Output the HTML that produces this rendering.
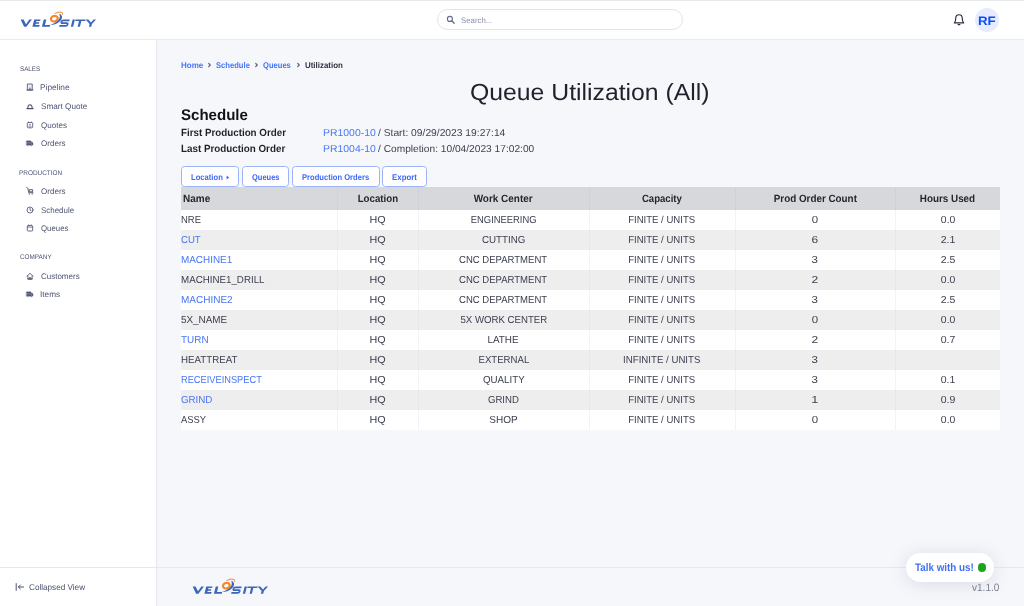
<!DOCTYPE html>
<html lang="en">
<head>
<meta charset="utf-8">
<title>Queue Utilization (All)</title>
<style>
*{box-sizing:border-box;margin:0;padding:0}
html,body{width:1024px;height:606px;overflow:hidden}
body{font-family:"Liberation Sans",sans-serif;background:#f6f7fb;color:#3c3f4f;position:relative;text-rendering:geometricPrecision}
a{text-decoration:none;color:#4876f6}
.topline{position:absolute;left:0;top:0;width:1024px;height:1px;background:#e8eae9;z-index:10}
.header{position:absolute;left:0;top:0;width:1024px;height:40px;background:#fff;border-bottom:1px solid #e9ebf4}
.sidebar{position:absolute;left:0;top:40px;width:157px;height:566px;background:#fff;border-right:1px solid #e4e6f0}
.sb-foot{position:absolute;left:0;top:567px;width:156px;height:39px;border-top:1px solid #e6e8f1;background:#fff}
.footer{position:absolute;left:157px;top:567px;width:867px;height:39px;border-top:1px solid #e6e8f1}
.t{position:absolute;white-space:nowrap;transform-origin:left center;display:block}
.s{display:inline-block;white-space:nowrap}
.abs{position:absolute}
#app{position:absolute;left:0;top:0;width:1024px;height:606px;will-change:transform}
.search{position:absolute;left:436.5px;top:9px;width:246.5px;height:21px;border:1px solid #e1e4ee;border-radius:10.5px;background:#fff}
.avatar{position:absolute;left:975px;top:8px;width:24.4px;height:24.4px;border-radius:50%;background:#e6ecfd}
.btn{position:absolute;top:166px;height:21px;border:1px solid #9cb3fa;border-radius:3.5px;background:#fff}
table{position:absolute;left:181px;top:187px;width:819px;border-collapse:collapse;table-layout:fixed;font-size:10.2px;color:#3c3f4f}
th{height:23px;background:#d7d8db;font-weight:bold;color:#23252f;text-align:center;font-size:10.5px;padding:1px 0 0 0;vertical-align:top;border-right:1px solid #d0d2db;line-height:22px}
th:first-child{text-align:left;padding-left:1.9px}
th:last-child,td:last-child{border-right:none}
td{height:20px;text-align:center;padding:1px 0 0 0;border-right:1px solid #ececef;line-height:19px;vertical-align:top}
td:first-child{text-align:left;padding-left:0.3px}
tr.o td{background:#fff;border-right-color:#f2f3f8}
tr.e td{background:#eeeeef;border-right-color:#e7e8ee}
.chat{position:absolute;left:906px;top:553px;width:88.2px;height:29.2px;border-radius:14.6px;background:#fff;box-shadow:0 2px 18px rgba(70,80,120,0.16)}
.dot{position:absolute;left:977.5px;top:563.2px;width:8.4px;height:8.4px;border-radius:50%;background:#1fa51a}
</style>
</head>
<body>
<div id="app">
<div class="header"></div>
<div class="topline"></div>
<div class="sidebar"></div>
<div class="sb-foot"></div>
<div class="footer"></div>

<svg class="abs" style="left:16px;top:9px" width="84.0" height="22.0" viewBox="16 9 84 22">
<g transform="translate(0,26.8) skewX(-14)" fill="#3c66bb" stroke="none">
<path d="M18.8 -7.4H21.7L25.4 -2.5L27.5 -7.4H30.1L26.4 0H24.1Z"/>
<path d="M32.4 -7.4H38.7V-5.7H35V-4.45H38.2V-2.95H35V-1.7H39.2V0H32.4Z"/>
<path d="M41.9 -7.4H44.5V-1.7H49.7V0H41.9Z"/>
<path d="M67.9 -6.5H61.6Q60.2 -6.5 60.2 -5.1Q60.2 -3.7 61.6 -3.7H65.6Q67 -3.7 67 -2.3Q67 -0.9 65.6 -0.9H59.1" fill="none" stroke="#3c66bb" stroke-width="1.8"/>
<path d="M70.8 -7.4H73.1V0H70.8Z"/>
<path d="M73.7 -7.4H83.8V-5.7H79.9V0H77.6V-5.7H73.7Z"/>
<path d="M83.8 -7.4H86.5L89.9 -4.3L91.8 -7.4H94.2L91.2 -2.9V0H88.9V-2.9Z"/>
</g>
<ellipse cx="54.4" cy="18.7" rx="3.4" ry="2.75" fill="none" stroke="#f6862c" stroke-width="2.2" transform="rotate(-12 54.4 18.7)"/>
<path d="M55 13.5C57.4 12.2 60.8 11.9 62.3 12.8C62.7 13.2 62.7 13.9 62.5 14.4" fill="none" stroke="#f6862c" stroke-width="1.1" stroke-linecap="round" opacity="0.8"/>
<path d="M59.9 13.7C61.5 14.8 62.4 16.4 62 17.9C61.3 20.6 58.1 23.1 55.1 24.2C53.5 24.8 51.5 25 50 24.9C52 24.4 53.4 23.7 54.5 23C56.4 21.9 57.8 20.7 58.8 19.4C59.9 17.9 60.3 16.2 59.3 14.8Z" fill="#3c66bb"/>
</svg>
<div class="search"></div>
<svg class="abs" style="left:445.8px;top:15.2px" width="10" height="10" viewBox="0 0 10 10"><circle cx="3.9" cy="3.9" r="2.5" fill="none" stroke="#646c8d" stroke-width="1.15"/><path d="M5.8 5.8L8.2 8.2" stroke="#646c8d" stroke-width="1.3" stroke-linecap="round"/></svg>
<span class="t" style="left:461.2px;top:14px;font-size:8px;line-height:13px;transform:scaleX(0.976);color:#8a90a8;">Search...</span>
<svg class="abs" style="left:952px;top:13px" width="14" height="14" viewBox="0 0 14 14"><path d="M2.3 9.9 C3.5 8.9 3.7 7.8 3.7 5.5 C3.7 3.2 5 1.7 7 1.7 C9 1.7 10.3 3.2 10.3 5.5 C10.3 7.8 10.5 8.9 11.7 9.9 Z" fill="none" stroke="#2a2d3c" stroke-width="1.15" stroke-linejoin="round"/><path d="M6.1 11.6 H7.9" fill="none" stroke="#2a2d3c" stroke-width="1.2" stroke-linecap="round"/></svg>
<div class="avatar"></div>
<span class="t" style="left:978.0px;top:12px;font-size:12.2px;line-height:18px;transform:scaleX(1.092);font-weight:bold;color:#0d4ff0;">RF</span>
<span class="t" style="left:19.6px;top:64px;font-size:6.7px;line-height:11px;transform:scaleX(0.938);color:#4d5472;">SALES</span>
<svg class="abs" style="left:24.5px;top:82.3px" width="10" height="10" viewBox="0 0 10 10" fill="none" stroke="#4c5371" stroke-width="0.85" stroke-linejoin="round" stroke-linecap="round"><rect x="2.75" y="2" width="4.5" height="6" fill="#eceef3"/><path d="M1.9 8.1H8.1" stroke-width="0.9"/><rect x="4.45" y="5.7" width="1.1" height="2.2" fill="#4c5371" stroke="none"/></svg>
<span class="t" style="left:40.3px;top:81px;font-size:8.2px;line-height:13px;transform:scaleX(1.016);color:#4d5472;">Pipeline</span>
<svg class="abs" style="left:24.5px;top:101.3px" width="10" height="10" viewBox="0 0 10 10" fill="none" stroke="#4c5371" stroke-width="0.85" stroke-linejoin="round" stroke-linecap="round"><path d="M2.8 7.5C2.7 4.9 3.9 3.8 5 3.8C6.1 3.8 7.3 4.9 7.2 7.5" stroke-width="1.1"/><path d="M1.9 7.6H8.1" stroke-width="1.2"/></svg>
<span class="t" style="left:40.6px;top:100px;font-size:8.2px;line-height:13px;transform:scaleX(0.999);color:#4d5472;">Smart Quote</span>
<svg class="abs" style="left:24.5px;top:119.9px" width="10" height="10" viewBox="0 0 10 10" fill="none" stroke="#4c5371" stroke-width="0.85" stroke-linejoin="round" stroke-linecap="round"><rect x="2.3" y="2.5" width="5.4" height="5.3" rx="1"/><path d="M3.5 2.3V2M6.5 2.3V2" stroke-width="0.8"/><circle cx="5" cy="4.5" r="0.7" fill="#4c5371" stroke="none"/><path d="M3.8 6.4C4.1 5.7 5.9 5.7 6.2 6.4" stroke-width="0.75"/></svg>
<span class="t" style="left:40.6px;top:119px;font-size:8.2px;line-height:13px;transform:scaleX(0.982);color:#4d5472;">Quotes</span>
<svg class="abs" style="left:24.5px;top:138.3px" width="10" height="10" viewBox="0 0 10 10" fill="none" stroke="#4c5371" stroke-width="0.85" stroke-linejoin="round" stroke-linecap="round"><path d="M1.7 2.9H5.9V7.2H1.7Z" fill="#4c5371" stroke-width="0.5"/><path d="M6.3 4.1H7.3L7.9 5.2V7.2H6.3Z" fill="#4c5371" stroke-width="0.5"/><path d="M1.9 4.9H5.4" stroke="#c3c6d3" stroke-width="0.5"/><circle cx="3.1" cy="7.6" r="0.75" fill="#4c5371" stroke="#fff" stroke-width="0.3"/><circle cx="6.8" cy="7.6" r="0.75" fill="#4c5371" stroke="#fff" stroke-width="0.3"/></svg>
<span class="t" style="left:40.6px;top:137px;font-size:8.2px;line-height:13px;transform:scaleX(0.984);color:#4d5472;">Orders</span>
<span class="t" style="left:19.4px;top:168px;font-size:6.7px;line-height:11px;transform:scaleX(0.960);color:#4d5472;">PRODUCTION</span>
<svg class="abs" style="left:24.5px;top:185.8px" width="10" height="10" viewBox="0 0 10 10" fill="none" stroke="#4c5371" stroke-width="0.85" stroke-linejoin="round" stroke-linecap="round"><path d="M1.8 1.6L2.8 2L3.7 6.7H8.1"/><rect x="4.6" y="3.7" width="3" height="2.1" stroke-width="0.95"/><circle cx="4.3" cy="7.9" r="0.7" fill="#4c5371" stroke="none"/><circle cx="7.2" cy="7.9" r="0.7" fill="#4c5371" stroke="none"/></svg>
<span class="t" style="left:40.6px;top:185px;font-size:8.2px;line-height:13px;transform:scaleX(0.984);color:#4d5472;">Orders</span>
<svg class="abs" style="left:24.5px;top:204.8px" width="10" height="10" viewBox="0 0 10 10" fill="none" stroke="#4c5371" stroke-width="0.85" stroke-linejoin="round" stroke-linecap="round"><circle cx="5" cy="5" r="3"/><path d="M5 3.4V5.1L6.1 5.7" stroke-width="0.8"/></svg>
<span class="t" style="left:40.6px;top:204px;font-size:8.2px;line-height:13px;transform:scaleX(0.971);color:#4d5472;">Schedule</span>
<svg class="abs" style="left:24.5px;top:223.3px" width="10" height="10" viewBox="0 0 10 10" fill="none" stroke="#4c5371" stroke-width="0.85" stroke-linejoin="round" stroke-linecap="round"><rect x="2.3" y="2.6" width="5.4" height="5.4" rx="0.9"/><path d="M2.5 4.1H7.5" stroke-width="0.75"/><path d="M3.7 2.4V1.9M6.3 2.4V1.9"/></svg>
<span class="t" style="left:40.6px;top:222px;font-size:8.2px;line-height:13px;transform:scaleX(0.956);color:#4d5472;">Queues</span>
<span class="t" style="left:19.6px;top:252px;font-size:6.7px;line-height:11px;transform:scaleX(0.951);color:#4d5472;">COMPANY</span>
<svg class="abs" style="left:24.5px;top:270.7px" width="10" height="10" viewBox="0 0 10 10" fill="none" stroke="#4c5371" stroke-width="0.85" stroke-linejoin="round" stroke-linecap="round"><path d="M1.9 5.2L5 2.3L8.1 5.2"/><path d="M2.9 4.9V8H7.1V4.9"/><path d="M4.4 8V6.5H5.6V8" stroke-width="0.75"/><path d="M2.9 8H7.1" stroke-width="1.1"/></svg>
<span class="t" style="left:40.6px;top:270px;font-size:8.2px;line-height:13px;transform:scaleX(0.976);color:#4d5472;">Customers</span>
<svg class="abs" style="left:24.5px;top:288.8px" width="10" height="10" viewBox="0 0 10 10" fill="none" stroke="#4c5371" stroke-width="0.85" stroke-linejoin="round" stroke-linecap="round"><path d="M1.7 2.9H5.9V7.2H1.7Z" fill="#4c5371" stroke-width="0.5"/><path d="M6.3 4.1H7.3L7.9 5.2V7.2H6.3Z" fill="#4c5371" stroke-width="0.5"/><path d="M1.9 4.9H5.4" stroke="#c3c6d3" stroke-width="0.5"/><circle cx="3.1" cy="7.6" r="0.75" fill="#4c5371" stroke="#fff" stroke-width="0.3"/><circle cx="6.8" cy="7.6" r="0.75" fill="#4c5371" stroke="#fff" stroke-width="0.3"/></svg>
<span class="t" style="left:40.2px;top:288px;font-size:8.2px;line-height:13px;transform:scaleX(1.005);color:#4d5472;">Items</span>
<svg class="abs" style="left:14.5px;top:582px" width="10" height="10" viewBox="0 0 10 10" fill="none" stroke="#4c5371" stroke-width="1" stroke-linecap="round" stroke-linejoin="round"><path d="M1.2 1.6V8.4"/><path d="M8.6 5H3.4M5.4 3L3.4 5L5.4 7"/></svg>
<span class="t" style="left:29.4px;top:580px;font-size:8.4px;line-height:14px;transform:scaleX(0.973);color:#4d5472;">Collapsed View</span>
<a class="t" style="left:180.7px;top:58px;font-size:8.4px;line-height:14px;transform:scaleX(0.960);font-weight:bold;color:#4876f6;">Home</a>
<a class="t" style="left:216.3px;top:58px;font-size:8.4px;line-height:14px;transform:scaleX(0.910);font-weight:bold;color:#4876f6;">Schedule</a>
<a class="t" style="left:263.4px;top:58px;font-size:8.4px;line-height:14px;transform:scaleX(0.906);font-weight:bold;color:#4876f6;">Queues</a>
<span class="t" style="left:304.5px;top:58px;font-size:8.4px;line-height:14px;transform:scaleX(0.946);font-weight:bold;color:#2e3140;">Utilization</span>
<svg class="abs" style="left:206.6px;top:61.8px" width="5" height="6" viewBox="0 0 5 6"><path d="M1.7 1.35L3.25 3L1.7 4.65" fill="none" stroke="#5b6282" stroke-width="1.2" stroke-linecap="round" stroke-linejoin="round"/></svg>
<svg class="abs" style="left:253.9px;top:61.8px" width="5" height="6" viewBox="0 0 5 6"><path d="M1.7 1.35L3.25 3L1.7 4.65" fill="none" stroke="#5b6282" stroke-width="1.2" stroke-linecap="round" stroke-linejoin="round"/></svg>
<svg class="abs" style="left:295.5px;top:61.8px" width="5" height="6" viewBox="0 0 5 6"><path d="M1.7 1.35L3.25 3L1.7 4.65" fill="none" stroke="#5b6282" stroke-width="1.2" stroke-linecap="round" stroke-linejoin="round"/></svg>
<h1 class="t" style="left:470.1px;top:77px;font-size:23.4px;line-height:30px;transform:scaleX(1.059);color:#1f212c;font-weight:normal;">Queue Utilization (All)</h1>
<h2 class="t" style="left:181.1px;top:105px;font-size:15.5px;line-height:21px;transform:scaleX(0.971);font-weight:bold;color:#111218;">Schedule</h2>
<span class="t" style="left:181.1px;top:126px;font-size:10.4px;line-height:15px;transform:scaleX(0.942);font-weight:bold;color:#1e202a;">First Production Order</span>
<span class="t" style="left:181.1px;top:142px;font-size:10.4px;line-height:15px;transform:scaleX(0.945);font-weight:bold;color:#1e202a;">Last Production Order</span>
<a class="t" style="left:322.6px;top:126px;font-size:10.0px;line-height:15px;transform:scaleX(1.043);color:#4876f6;">PR1000-10</a>
<span class="t" style="left:378.2px;top:126px;font-size:10.0px;line-height:15px;transform:scaleX(1.027);color:#3c3f4f;">/ Start: 09/29/2023 19:27:14</span>
<a class="t" style="left:322.6px;top:142px;font-size:10.0px;line-height:15px;transform:scaleX(1.043);color:#4876f6;">PR1004-10</a>
<span class="t" style="left:378.2px;top:142px;font-size:10.0px;line-height:15px;transform:scaleX(1.018);color:#3c3f4f;">/ Completion: 10/04/2023 17:02:00</span>
<div class="btn" style="left:181.2px;width:57.4px"></div>
<div class="btn" style="left:241.5px;width:47.5px"></div>
<div class="btn" style="left:291.6px;width:88.1px"></div>
<div class="btn" style="left:382.2px;width:45.2px"></div>
<span class="t" style="left:191.0px;top:170px;font-size:8.4px;line-height:14px;transform:scaleX(0.911);font-weight:bold;color:#3f68f5;">Location</span>
<svg class="abs" style="left:225.6px;top:174.6px" width="4" height="5" viewBox="0 0 4 5"><path d="M0.6 0.6L3.2 2.5L0.6 4.4Z" fill="#3f68f5"/></svg>
<span class="t" style="left:251.7px;top:170px;font-size:8.4px;line-height:14px;transform:scaleX(0.896);font-weight:bold;color:#3f68f5;">Queues</span>
<span class="t" style="left:302.3px;top:170px;font-size:8.4px;line-height:14px;transform:scaleX(0.907);font-weight:bold;color:#3f68f5;">Production Orders</span>
<span class="t" style="left:392.1px;top:170px;font-size:8.4px;line-height:14px;transform:scaleX(0.940);font-weight:bold;color:#3f68f5;">Export</span>
<table>
<colgroup><col style="width:156px"><col style="width:81px"><col style="width:171px"><col style="width:146px"><col style="width:160px"><col style="width:105px"></colgroup>
<tr><th><span class="s" style="transform:scaleX(0.951);transform-origin:left center">Name</span></th><th><span class="s" style="transform:scaleX(0.924);transform-origin:center center">Location</span></th><th><span class="s" style="transform:scaleX(0.947);transform-origin:center center">Work Center</span></th><th><span class="s" style="transform:scaleX(0.913);transform-origin:center center">Capacity</span></th><th><span class="s" style="transform:scaleX(0.938);transform-origin:center center">Prod Order Count</span></th><th><span class="s" style="transform:scaleX(0.938);transform-origin:center center">Hours Used</span></th></tr>
<tr class="o"><td><span class="s" style="transform:scaleX(0.928);transform-origin:left center">NRE</span></td><td><span class="s" style="transform:scaleX(1.059);transform-origin:center center">HQ</span></td><td><span class="s" style="transform:scaleX(0.922);transform-origin:center center">ENGINEERING</span></td><td><span class="s" style="transform:scaleX(0.940);transform-origin:center center">FINITE / UNITS</span></td><td><span class="s" style="transform:scaleX(1.126);transform-origin:center center">0</span></td><td><span class="s" style="transform:scaleX(1.023);transform-origin:center center">0.0</span></td></tr>
<tr class="e"><td><span class="s" style="transform:scaleX(0.940);transform-origin:left center"><a>CUT</a></span></td><td><span class="s" style="transform:scaleX(1.059);transform-origin:center center">HQ</span></td><td><span class="s" style="transform:scaleX(0.958);transform-origin:center center">CUTTING</span></td><td><span class="s" style="transform:scaleX(0.940);transform-origin:center center">FINITE / UNITS</span></td><td><span class="s" style="transform:scaleX(1.165);transform-origin:center center">6</span></td><td><span class="s" style="transform:scaleX(1.040);transform-origin:center center">2.1</span></td></tr>
<tr class="o"><td><span class="s" style="transform:scaleX(0.973);transform-origin:left center"><a>MACHINE1</a></span></td><td><span class="s" style="transform:scaleX(1.059);transform-origin:center center">HQ</span></td><td><span class="s" style="transform:scaleX(0.936);transform-origin:center center">CNC DEPARTMENT</span></td><td><span class="s" style="transform:scaleX(0.940);transform-origin:center center">FINITE / UNITS</span></td><td><span class="s" style="transform:scaleX(1.135);transform-origin:center center">3</span></td><td><span class="s" style="transform:scaleX(1.034);transform-origin:center center">2.5</span></td></tr>
<tr class="e"><td><span class="s" style="transform:scaleX(0.958);transform-origin:left center">MACHINE1_DRILL</span></td><td><span class="s" style="transform:scaleX(1.059);transform-origin:center center">HQ</span></td><td><span class="s" style="transform:scaleX(0.936);transform-origin:center center">CNC DEPARTMENT</span></td><td><span class="s" style="transform:scaleX(0.940);transform-origin:center center">FINITE / UNITS</span></td><td><span class="s" style="transform:scaleX(1.182);transform-origin:center center">2</span></td><td><span class="s" style="transform:scaleX(1.023);transform-origin:center center">0.0</span></td></tr>
<tr class="o"><td><span class="s" style="transform:scaleX(0.981);transform-origin:left center"><a>MACHINE2</a></span></td><td><span class="s" style="transform:scaleX(1.059);transform-origin:center center">HQ</span></td><td><span class="s" style="transform:scaleX(0.936);transform-origin:center center">CNC DEPARTMENT</span></td><td><span class="s" style="transform:scaleX(0.940);transform-origin:center center">FINITE / UNITS</span></td><td><span class="s" style="transform:scaleX(1.135);transform-origin:center center">3</span></td><td><span class="s" style="transform:scaleX(1.034);transform-origin:center center">2.5</span></td></tr>
<tr class="e"><td><span class="s" style="transform:scaleX(0.972);transform-origin:left center">5X_NAME</span></td><td><span class="s" style="transform:scaleX(1.059);transform-origin:center center">HQ</span></td><td><span class="s" style="transform:scaleX(0.946);transform-origin:center center">5X WORK CENTER</span></td><td><span class="s" style="transform:scaleX(0.940);transform-origin:center center">FINITE / UNITS</span></td><td><span class="s" style="transform:scaleX(1.126);transform-origin:center center">0</span></td><td><span class="s" style="transform:scaleX(1.023);transform-origin:center center">0.0</span></td></tr>
<tr class="o"><td><span class="s" style="transform:scaleX(0.975);transform-origin:left center"><a>TURN</a></span></td><td><span class="s" style="transform:scaleX(1.059);transform-origin:center center">HQ</span></td><td><span class="s" style="transform:scaleX(0.972);transform-origin:center center">LATHE</span></td><td><span class="s" style="transform:scaleX(0.940);transform-origin:center center">FINITE / UNITS</span></td><td><span class="s" style="transform:scaleX(1.182);transform-origin:center center">2</span></td><td><span class="s" style="transform:scaleX(1.032);transform-origin:center center">0.7</span></td></tr>
<tr class="e"><td><span class="s" style="transform:scaleX(0.954);transform-origin:left center">HEATTREAT</span></td><td><span class="s" style="transform:scaleX(1.059);transform-origin:center center">HQ</span></td><td><span class="s" style="transform:scaleX(0.945);transform-origin:center center">EXTERNAL</span></td><td><span class="s" style="transform:scaleX(0.948);transform-origin:center center">INFINITE / UNITS</span></td><td><span class="s" style="transform:scaleX(1.135);transform-origin:center center">3</span></td><td></td></tr>
<tr class="o"><td><span class="s" style="transform:scaleX(0.909);transform-origin:left center"><a>RECEIVEINSPECT</a></span></td><td><span class="s" style="transform:scaleX(1.059);transform-origin:center center">HQ</span></td><td><span class="s" style="transform:scaleX(0.959);transform-origin:center center">QUALITY</span></td><td><span class="s" style="transform:scaleX(0.940);transform-origin:center center">FINITE / UNITS</span></td><td><span class="s" style="transform:scaleX(1.135);transform-origin:center center">3</span></td><td><span class="s" style="transform:scaleX(1.031);transform-origin:center center">0.1</span></td></tr>
<tr class="e"><td><span class="s" style="transform:scaleX(0.957);transform-origin:left center"><a>GRIND</a></span></td><td><span class="s" style="transform:scaleX(1.059);transform-origin:center center">HQ</span></td><td><span class="s" style="transform:scaleX(0.941);transform-origin:center center">GRIND</span></td><td><span class="s" style="transform:scaleX(0.940);transform-origin:center center">FINITE / UNITS</span></td><td><span class="s" style="transform:scaleX(1.248);transform-origin:center center">1</span></td><td><span class="s" style="transform:scaleX(1.030);transform-origin:center center">0.9</span></td></tr>
<tr class="o"><td><span class="s" style="transform:scaleX(0.923);transform-origin:left center">ASSY</span></td><td><span class="s" style="transform:scaleX(1.059);transform-origin:center center">HQ</span></td><td><span class="s" style="transform:scaleX(0.985);transform-origin:center center">SHOP</span></td><td><span class="s" style="transform:scaleX(0.940);transform-origin:center center">FINITE / UNITS</span></td><td><span class="s" style="transform:scaleX(1.126);transform-origin:center center">0</span></td><td><span class="s" style="transform:scaleX(1.023);transform-origin:center center">0.0</span></td></tr>
</table>
<svg class="abs" style="left:187.6px;top:576px" width="84.0" height="22.0" viewBox="16 9 84 22">
<g transform="translate(0,26.8) skewX(-14)" fill="#3c66bb" stroke="none">
<path d="M18.8 -7.4H21.7L25.4 -2.5L27.5 -7.4H30.1L26.4 0H24.1Z"/>
<path d="M32.4 -7.4H38.7V-5.7H35V-4.45H38.2V-2.95H35V-1.7H39.2V0H32.4Z"/>
<path d="M41.9 -7.4H44.5V-1.7H49.7V0H41.9Z"/>
<path d="M67.9 -6.5H61.6Q60.2 -6.5 60.2 -5.1Q60.2 -3.7 61.6 -3.7H65.6Q67 -3.7 67 -2.3Q67 -0.9 65.6 -0.9H59.1" fill="none" stroke="#3c66bb" stroke-width="1.8"/>
<path d="M70.8 -7.4H73.1V0H70.8Z"/>
<path d="M73.7 -7.4H83.8V-5.7H79.9V0H77.6V-5.7H73.7Z"/>
<path d="M83.8 -7.4H86.5L89.9 -4.3L91.8 -7.4H94.2L91.2 -2.9V0H88.9V-2.9Z"/>
</g>
<ellipse cx="54.4" cy="18.7" rx="3.4" ry="2.75" fill="none" stroke="#f6862c" stroke-width="2.2" transform="rotate(-12 54.4 18.7)"/>
<path d="M55 13.5C57.4 12.2 60.8 11.9 62.3 12.8C62.7 13.2 62.7 13.9 62.5 14.4" fill="none" stroke="#f6862c" stroke-width="1.1" stroke-linecap="round" opacity="0.8"/>
<path d="M59.9 13.7C61.5 14.8 62.4 16.4 62 17.9C61.3 20.6 58.1 23.1 55.1 24.2C53.5 24.8 51.5 25 50 24.9C52 24.4 53.4 23.7 54.5 23C56.4 21.9 57.8 20.7 58.8 19.4C59.9 17.9 60.3 16.2 59.3 14.8Z" fill="#3c66bb"/>
</svg>
<div class="chat"></div><div class="dot"></div>
<span class="t" style="left:915.1px;top:560px;font-size:10.9px;line-height:16px;transform:scaleX(0.902);font-weight:bold;color:#3f6ef6;">Talk with us!</span>
<span class="t" style="left:972.2px;top:580px;font-size:10.6px;line-height:16px;transform:scaleX(0.949);color:#7c7f8b;">v1.1.0</span>
</div>
</body>
</html>
